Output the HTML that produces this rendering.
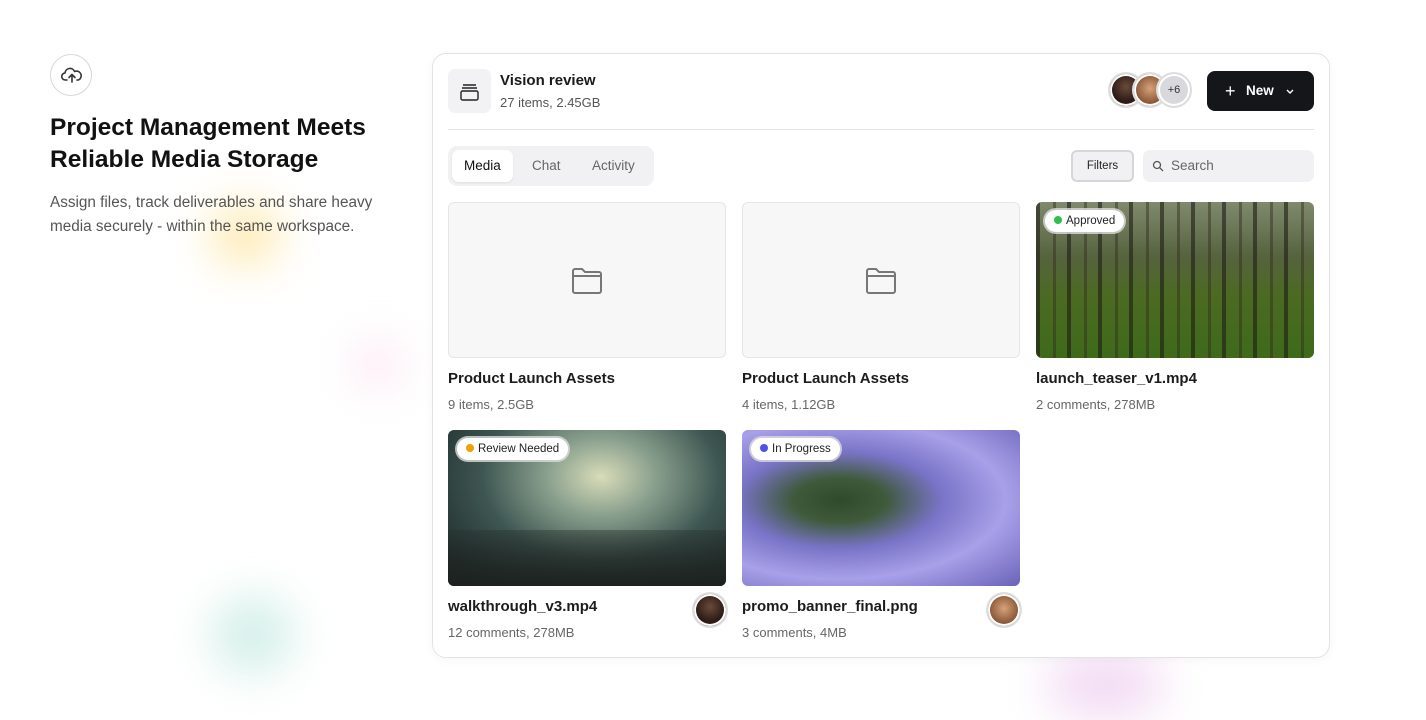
<!DOCTYPE html>
<html><head><meta charset="utf-8"><style>
*{box-sizing:border-box;margin:0;padding:0}
body{width:1426px;height:707px;background:#fff;font-family:"Liberation Sans",sans-serif;color:#1a1a1a;position:relative;overflow:hidden}
.blob{position:absolute;border-radius:50%;filter:blur(22px)}
.card{position:absolute;left:432px;top:53px;width:898px;height:605px;border:1px solid #e3e3e6;border-radius:14px;background:#fff;box-shadow:0 2px 10px rgba(0,0,0,.04)}
.abs{position:absolute}
.thumb{position:absolute;width:278px;height:156px;border-radius:6px;overflow:hidden}
.ph{background:#f7f7f8;border:1px solid #e6e6e8}
.t{position:absolute;font-size:15px;font-weight:bold;color:#1c1c1c}
.m{position:absolute;font-size:13px;color:#666}
.badge{position:absolute;left:9px;top:8px;height:22px;padding:0 9px 0 9px;background:#fff;border-radius:11px;font-size:11.5px;line-height:22px;color:#222;box-shadow:0 0 0 2px rgba(220,220,220,.8)}
.badge i{display:inline-block;width:8px;height:8px;border-radius:50%;margin-right:4px;vertical-align:-0px}
.av{position:absolute;width:36px;height:36px;border-radius:50%;border:2px solid #ddd;box-shadow:inset 0 0 0 2px #fff}
</style></head><body>
<div class="blob" style="left:210px;top:205px;width:70px;height:60px;background:#fde9b0"></div>
<div class="blob" style="left:355px;top:345px;width:45px;height:40px;background:#fbe1f0"></div>
<div class="blob" style="left:210px;top:595px;width:85px;height:80px;background:#d6f0ea"></div>
<div class="blob" style="left:1045px;top:650px;width:120px;height:70px;background:#f3dcf4"></div>

<div class="abs" style="left:50px;top:54px;width:42px;height:42px;border:1px solid #d8d8d8;border-radius:50%">
<svg width="42" height="42" viewBox="0 0 42 42" fill="none" stroke="#333" stroke-width="1.6" stroke-linecap="round" stroke-linejoin="round"><path d="M16 25h-1.5a3.5 3.5 0 0 1-.5-7 5 5 0 0 1 9.6-1.5A3.8 3.8 0 0 1 27.5 25H26"/><path d="M21 27v-7M18 22.5l3-3 3 3"/></svg></div>
<div class="abs" style="left:50px;top:112px;font-size:24.5px;font-weight:bold;line-height:32px;color:#111">Project Management Meets<br>Reliable Media Storage</div>
<div class="abs" style="left:50px;top:191px;font-size:15.3px;line-height:24px;color:#555">Assign files, track deliverables and share heavy<br>media securely - within the same workspace.</div>

<div class="card"></div>
<div class="abs" style="left:448px;top:69px;width:43px;height:44px;background:#f2f2f4;border-radius:7px">
<svg width="43" height="44" viewBox="0 0 43 44" fill="none" stroke="#222" stroke-width="1.4"><path d="M15 16h13M14 19h15"/><rect x="13" y="22" width="17" height="9" rx="1.5"/></svg></div>
<div class="abs" style="left:500px;top:72px;font-size:15px;font-weight:bold">Vision review</div>
<div class="abs" style="left:500px;top:95px;font-size:13px;color:#555">27 items, 2.45GB</div>
<div class="av" style="left:1108px;top:72px;background:radial-gradient(circle at 50% 40%,#6b4a3a,#2a1a16 60%,#6a2a2a)"></div>
<div class="av" style="left:1132px;top:72px;background:radial-gradient(circle at 50% 45%,#d8a27a,#8a5a3a 60%,#6a6a58)"></div>
<div class="av" style="left:1156px;top:72px;background:#d9d9dd;font-size:11px;line-height:32px;text-align:center;color:#333">+6</div>
<div class="abs" style="left:1207px;top:71px;width:107px;height:40px;background:#15161a;border-radius:8px;color:#fff;font-size:13.5px;font-weight:bold;line-height:40px">
<span style="position:absolute;left:18px;font-size:18px;font-weight:normal">+</span><span style="position:absolute;left:39px">New</span>
<svg class="abs" style="left:78px;top:17px" width="10" height="8" viewBox="0 0 10 8" fill="none" stroke="#fff" stroke-width="1.4"><path d="M2 2l3 3 3-3"/></svg></div>
<div class="abs" style="left:448px;top:129px;width:866px;height:1px;background:#e3e3e6"></div>

<div class="abs" style="left:448px;top:146px;width:206px;height:40px;background:#f1f1f3;border-radius:9px"></div>
<div class="abs" style="left:452px;top:150px;width:61px;height:32px;background:#fff;border-radius:7px;box-shadow:0 1px 2px rgba(0,0,0,.08)"></div>
<div class="abs" style="left:464px;top:158px;font-size:13.5px;color:#111">Media</div>
<div class="abs" style="left:532px;top:158px;font-size:13.5px;color:#666">Chat</div>
<div class="abs" style="left:592px;top:158px;font-size:13.5px;color:#666">Activity</div>
<div class="abs" style="left:1071px;top:150px;width:63px;height:32px;background:#f1f1f3;border:2px solid #d6d6d9;border-radius:6px;font-size:11.5px;line-height:28px;text-align:center;color:#222">Filters</div>
<div class="abs" style="left:1143px;top:150px;width:171px;height:32px;background:#f1f1f3;border-radius:7px">
<svg class="abs" style="left:9px;top:10px" width="12" height="12" viewBox="0 0 12 12" fill="none" stroke="#555" stroke-width="1.3"><circle cx="5" cy="5" r="3.5"/><path d="M7.6 7.6L11 11"/></svg>
<span class="abs" style="left:28px;top:8px;font-size:13.5px;color:#666">Search</span></div>

<div class="thumb ph" style="left:448px;top:202px"><svg class="abs" style="left:122px;top:63px" width="32" height="30" viewBox="0 0 32 30" fill="none" stroke="#777" stroke-width="2"><path d="M2 5a2 2 0 0 1 2-2h7l3 3h14a2 2 0 0 1 2 2v17a2 2 0 0 1-2 2H4a2 2 0 0 1-2-2z"/><path d="M2 10h28"/></svg></div>
<div class="thumb ph" style="left:742px;top:202px"><svg class="abs" style="left:122px;top:63px" width="32" height="30" viewBox="0 0 32 30" fill="none" stroke="#777" stroke-width="2"><path d="M2 5a2 2 0 0 1 2-2h7l3 3h14a2 2 0 0 1 2 2v17a2 2 0 0 1-2 2H4a2 2 0 0 1-2-2z"/><path d="M2 10h28"/></svg></div>
<div class="thumb" style="left:1036px;top:202px;background:repeating-linear-gradient(90deg,rgba(30,28,20,.6) 0 4px,transparent 4px 17px,rgba(50,42,30,.45) 17px 20px,transparent 20px 31px),linear-gradient(180deg,#7f8a6e 0%,#56633e 35%,#4b6a22 60%,#3f6a1a 100%)">
<div class="badge"><i style="background:#2ec04a"></i>Approved</div></div>
<div class="t" style="left:448px;top:370px">Product Launch Assets</div>
<div class="m" style="left:448px;top:397px">9 items, 2.5GB</div>
<div class="t" style="left:742px;top:370px">Product Launch Assets</div>
<div class="m" style="left:742px;top:397px">4 items, 1.12GB</div>
<div class="t" style="left:1036px;top:370px">launch_teaser_v1.mp4</div>
<div class="m" style="left:1036px;top:397px">2 comments, 278MB</div>

<div class="thumb" style="left:448px;top:430px;background:radial-gradient(ellipse at 55% 30%,#d8dcb8 0%,#8aa08e 25%,#3e5652 55%,#1e2a2a 90%)">
<div class="abs" style="left:0;top:100px;width:278px;height:56px;background:linear-gradient(180deg,rgba(40,50,45,.4),#1d2220)"></div>
<div class="badge"><i style="background:#f0a000"></i>Review Needed</div></div>
<div class="thumb" style="left:742px;top:430px;background:radial-gradient(ellipse at 35% 45%,#2e4a2a 0%,#3e5a3a 18%,#7a74c8 40%,#a8a0e8 65%,#6a62b8 100%)">
<div class="badge"><i style="background:#4d52e8"></i>In Progress</div></div>
<div class="t" style="left:448px;top:598px">walkthrough_v3.mp4</div>
<div class="m" style="left:448px;top:625px">12 comments, 278MB</div>
<div class="av" style="left:692px;top:592px;background:radial-gradient(circle at 50% 40%,#6b4a3a,#2a1a16 60%,#6a2a2a)"></div>
<div class="t" style="left:742px;top:598px">promo_banner_final.png</div>
<div class="m" style="left:742px;top:625px">3 comments, 4MB</div>
<div class="av" style="left:986px;top:592px;background:radial-gradient(circle at 50% 45%,#d8a27a,#8a5a3a 60%,#6a6a58)"></div>
</body></html>
